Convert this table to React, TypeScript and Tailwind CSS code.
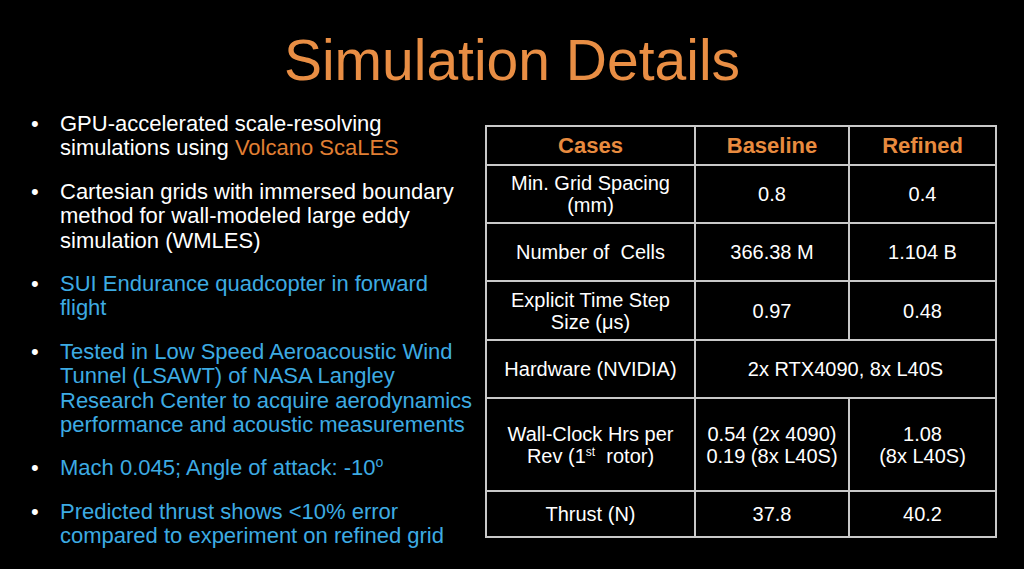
export default function App() {
  const bullets = [
    {
      color: "text-white",
      body: (
        <>
          GPU-accelerated scale-resolving simulations using{" "}
          <span className="text-[#E17F33]">Volcano ScaLES</span>
        </>
      ),
    },
    {
      color: "text-white",
      body: <>Cartesian grids with immersed boundary method for wall-modeled large eddy simulation (WMLES)</>,
    },
    {
      color: "text-[#3DABE3]",
      body: <>SUI Endurance quadcopter in forward flight</>,
    },
    {
      color: "text-[#3DABE3]",
      body: (
        <>
          Tested in Low Speed Aeroacoustic Wind Tunnel (LSAWT) of NASA Langley Research Center to acquire
          aerodynamics performance and acoustic measurements
        </>
      ),
    },
    {
      color: "text-[#3DABE3]",
      body: (
        <>
          Mach 0.045; Angle of attack: -10<span className="relative -top-[8px] text-[14px] leading-none">o</span>
        </>
      ),
    },
    {
      color: "text-[#3DABE3]",
      body: <>Predicted thrust shows &lt;10% error compared to experiment on refined grid</>,
    },
  ];

  const cell = "border-2 border-[#c9c9c9] text-center align-middle px-1";

  return (
    <div
      className="w-[1024px] h-[569px] bg-black overflow-hidden"
      style={{ fontFamily: '"Liberation Sans", Arial, sans-serif' }}
    >
      <h1 className="pt-[32px] text-[57px] leading-none text-center text-[#E98E44]">Simulation Details</h1>

      <div className="flex items-start mt-[23px]">
        {/* left: bullet points */}
        <ul className="w-[485px] shrink-0 pl-[31px] flex flex-col gap-[19px] text-[22px] leading-[24.4px]">
          {bullets.map((b, i) => (
            <li key={i} className={`flex ${b.color}`}>
              <span className="w-[29px] shrink-0 text-white">•</span>
              <span className="w-[416px]">{b.body}</span>
            </li>
          ))}
        </ul>

        {/* right: table */}
        <table className="mt-[13px] w-[510px] table-fixed border-collapse text-white text-[20px] leading-[22px]">
          <colgroup>
            <col className="w-[209px]" />
            <col className="w-[154px]" />
            <col className="w-[147px]" />
          </colgroup>
          <tbody>
            <tr className="h-[39px] text-[22px] font-bold text-[#E88B3F]">
              <td className={cell}>Cases</td>
              <td className={cell}>Baseline</td>
              <td className={cell}>Refined</td>
            </tr>
            <tr className="h-[58px]">
              <td className={cell}>
                Min. Grid Spacing
                <br />
                (mm)
              </td>
              <td className={cell}>0.8</td>
              <td className={cell}>0.4</td>
            </tr>
            <tr className="h-[58px]">
              <td className={cell}>Number of&nbsp; Cells</td>
              <td className={cell}>366.38 M</td>
              <td className={cell}>1.104 B</td>
            </tr>
            <tr className="h-[59px]">
              <td className={cell}>
                Explicit Time Step
                <br />
                Size (μs)
              </td>
              <td className={cell}>0.97</td>
              <td className={cell}>0.48</td>
            </tr>
            <tr className="h-[58px]">
              <td className={cell}>Hardware (NVIDIA)</td>
              <td className={cell} colSpan={2}>
                2x RTX4090, 8x L40S
              </td>
            </tr>
            <tr className="h-[93px]">
              <td className={cell}>
                Wall-Clock Hrs per
                <br />
                Rev (1<span className="relative -top-[7px] text-[12px] leading-none">st</span>&nbsp; rotor)
              </td>
              <td className={cell}>
                0.54 (2x 4090)
                <br />
                0.19 (8x L40S)
              </td>
              <td className={cell}>
                1.08
                <br />
                (8x L40S)
              </td>
            </tr>
            <tr className="h-[46px]">
              <td className={cell}>Thrust (N)</td>
              <td className={cell}>37.8</td>
              <td className={cell}>40.2</td>
            </tr>
          </tbody>
        </table>
      </div>
    </div>
  );
}
